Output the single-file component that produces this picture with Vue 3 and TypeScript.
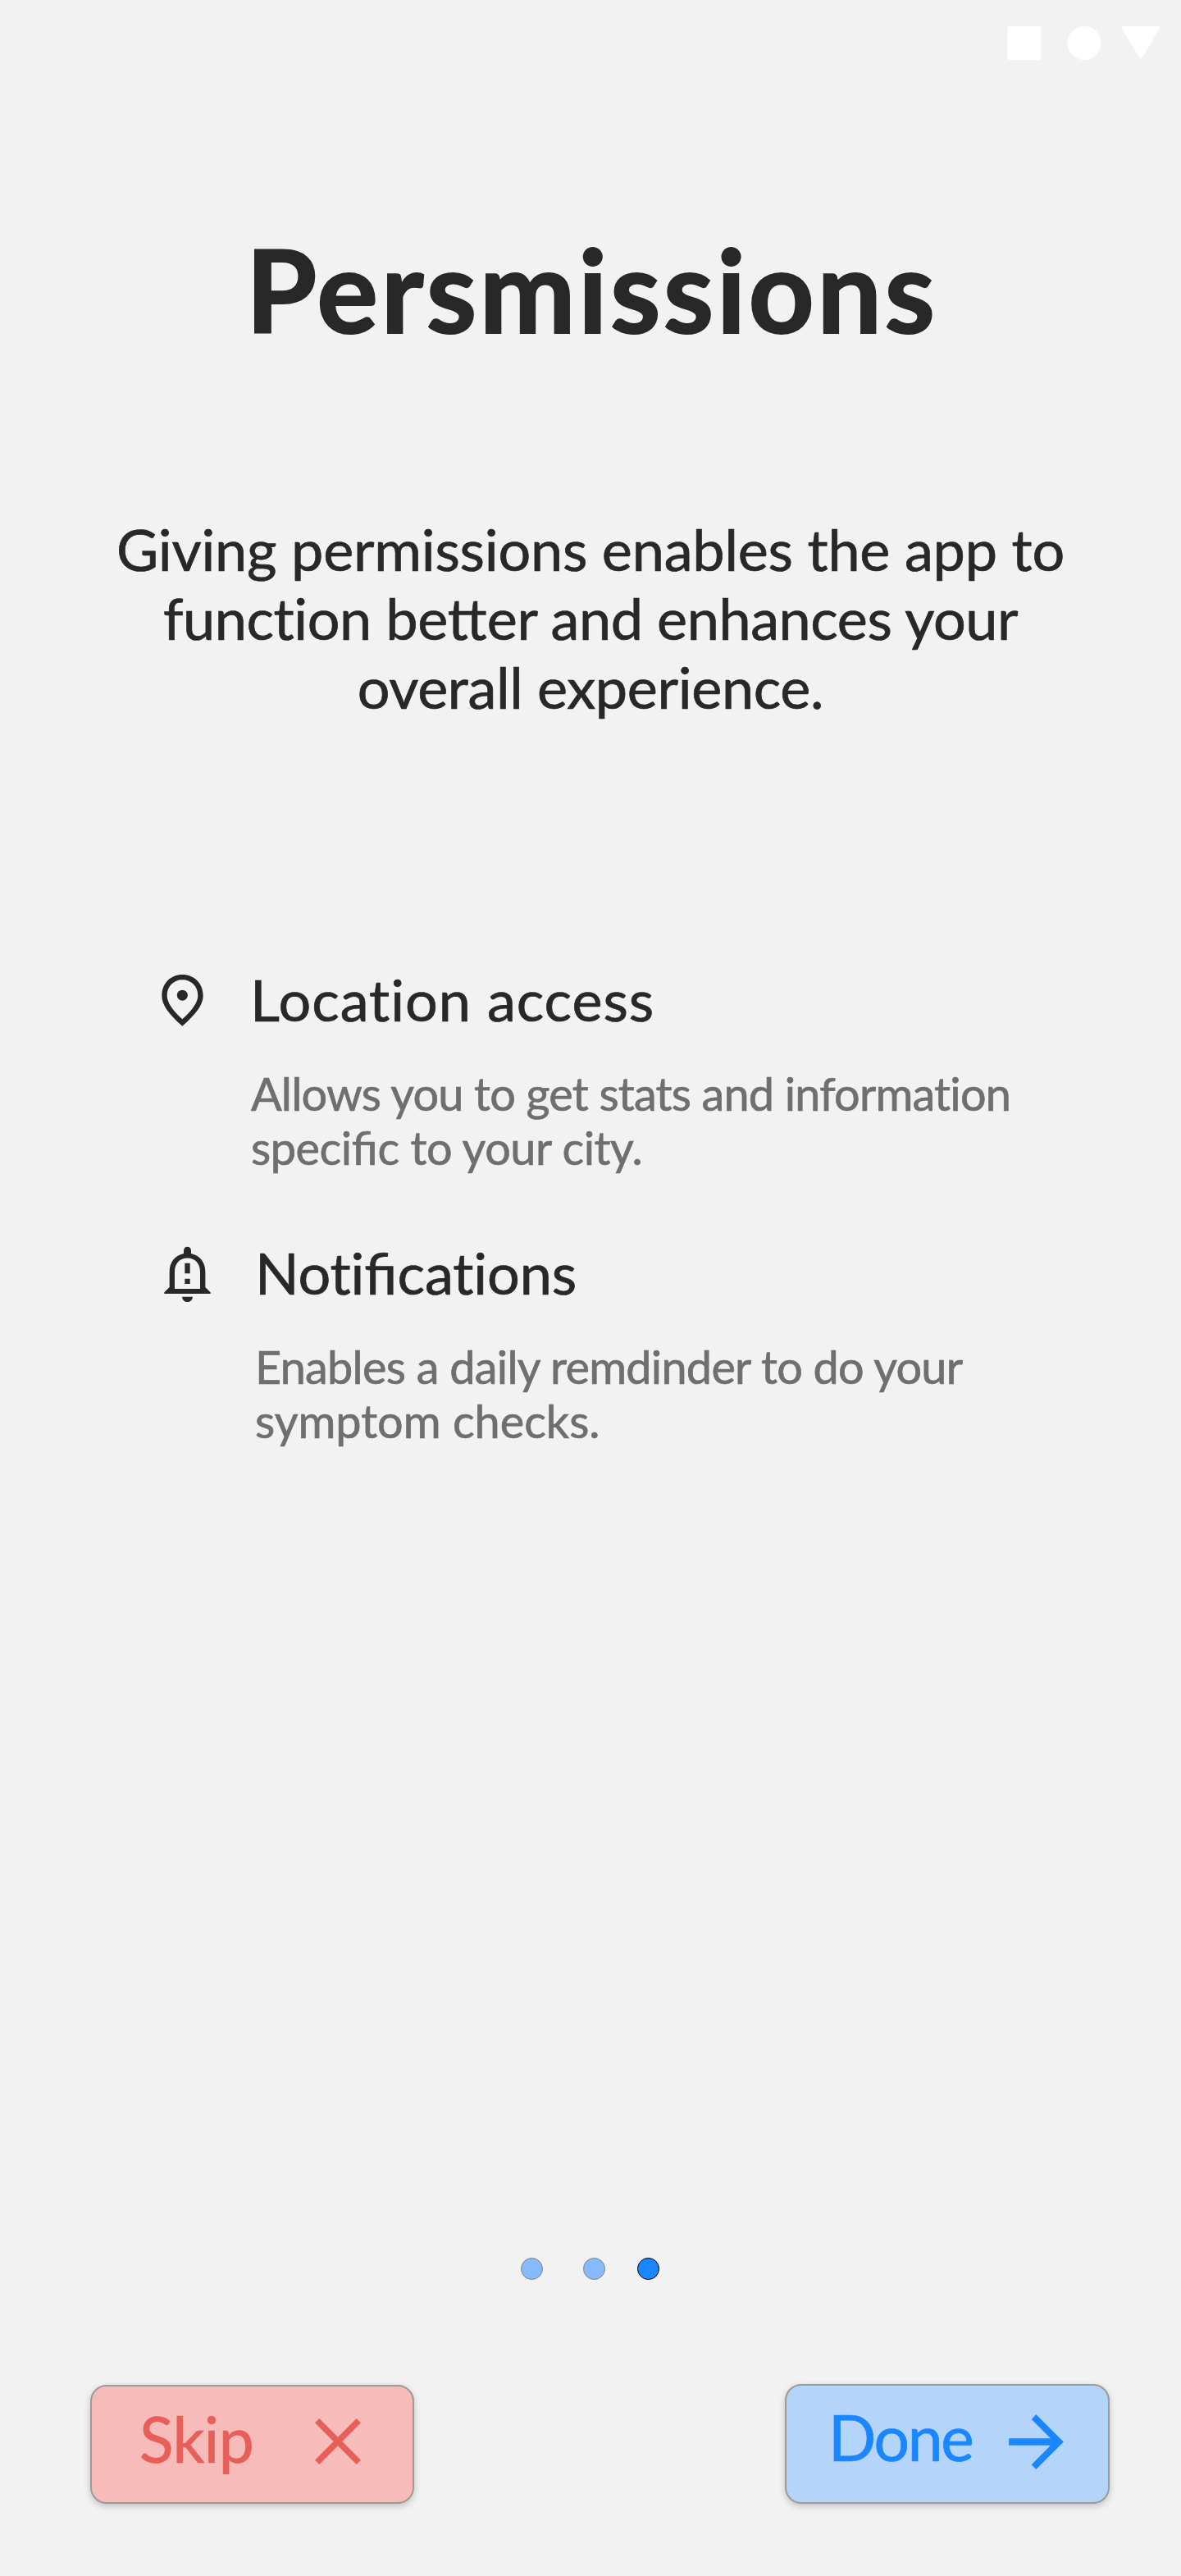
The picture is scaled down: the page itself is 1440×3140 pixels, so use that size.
<script setup lang="ts">
interface Line {
  text: string
  spacing: number
}
interface Permission {
  id: 'location' | 'notifications'
  title: Line
  details: Line[]
}

const intro: Line[] = [
  { text: 'Giving permissions enables the app to', spacing: -0.22 },
  { text: 'function better and enhances your', spacing: -0.44 },
  { text: 'overall experience.', spacing: -0.36 },
]

const permissions: Permission[] = [
  {
    id: 'location',
    title: { text: 'Location access', spacing: 0.97 },
    details: [
      { text: 'Allows you to get stats and information', spacing: -0.8 },
      { text: 'specific to your city.', spacing: -0.46 },
    ],
  },
  {
    id: 'notifications',
    title: { text: 'Notifications', spacing: -0.1 },
    details: [
      { text: 'Enables a daily remdinder to do your', spacing: -0.74 },
      { text: 'symptom checks.', spacing: 0 },
    ],
  },
]

const steps = ['first', 'second', 'third']

// Splits out the letter pairs that are set as ligatures.
const pieces = (text: string): string[] => text.split(/(fi|tt)/).filter(Boolean)
const isPair = (piece: string): boolean => piece === 'fi' || piece === 'tt'
</script>

<template>
  <main class="screen">
    <div class="status">
      <svg class="status-icons" viewBox="0 0 186 42">
        <rect x="0.5" y="0" width="41" height="41" rx="2.5" />
        <circle cx="94" cy="20.5" r="20.5" />
        <path d="M141.500 0H184.500Q187 0.800 185.800 3.300L165.200 37.500Q163 40.500 160.800 37.500L140.200 3.300Q139 0.800 141.500 0Z" />
      </svg>
    </div>

    <h1 class="title">Persmissions</h1>

    <p class="intro">
      <span v-for="line in intro" :key="line.text" class="line" :style="{ letterSpacing: line.spacing + 'px' }"><span v-for="(p, i) in pieces(line.text)" :key="i" :class="{ pair: isPair(p) }">{{ p }}</span></span>
    </p>

    <section class="permissions">
      <article v-for="item in permissions" :key="item.id" class="permission" :class="item.id">
        <svg v-if="item.id === 'location'" class="icon" viewBox="0 0 270 270">
          <path fill-rule="evenodd" d="M127 54C84 54 52 86 52 131C52 164 77 198 127 242C177 198 203 164 203 131C203 86 170 54 127 54ZM127 73C160 73 184 97 184 131C184 154 164 183 127 217C90 183 71 154 71 131C71 97 95 73 127 73Z" />
          <circle cx="127" cy="129.500" r="19.500" />
        </svg>
        <svg v-else class="icon" viewBox="0 0 270 270">
          <path fill-rule="evenodd" d="M132 69V57.500A13.500 13.500 0 0 1 159 57.500V69C191 76 211 101 211 135V192L230 211V216H61V211L80 192V135C80 101 100 76 132 69ZM99 198H192V135C192 105 173 85.500 145.500 85.500C118 85.500 99 105 99 135Z" />
          <path d="M136 104H155V142H136ZM136 161H155V180H136ZM126 227H165A19.500 19 0 0 1 126 227Z" />
        </svg>
        <div class="copy">
          <h2 :style="{ letterSpacing: item.title.spacing + 'px' }"><span v-for="(p, i) in pieces(item.title.text)" :key="i" :class="{ pair: isPair(p) }">{{ p }}</span></h2>
          <p>
            <span v-for="line in item.details" :key="line.text" class="line" :style="{ letterSpacing: line.spacing + 'px' }"><span v-for="(p, i) in pieces(line.text)" :key="i" :class="{ pair: isPair(p) }">{{ p }}</span></span>
          </p>
        </div>
      </article>
    </section>

    <div class="steps">
      <span v-for="step in steps" :key="step" class="dot" :class="step"></span>
    </div>

    <footer class="actions">
      <button class="button skip" type="button">
        <span>Skip</span>
        <svg viewBox="882 204 168 168">
          <path d="M882 220L898 204L966 272L1034 204L1050 220L982 288L1050 356L1034 372L966 304L898 372L882 356L950 288Z" />
        </svg>
      </button>
      <button class="button done" type="button">
        <span>Done</span>
        <svg viewBox="900 188 201 202">
          <path d="M900 276H1053L983 206L1000 188L1101 289L1000 390L983 373L1053 302H900Z" />
        </svg>
      </button>
    </footer>
  </main>
</template>

<style>
body {
  margin: 0;
  background: #f2f2f2;
}
</style>

<style scoped>
.screen {
  box-sizing: border-box;
  width: 1440px;
  height: 3140px;
  display: flex;
  flex-direction: column;
  overflow: hidden;
  background: #f2f2f2;
  color: #282828;
  font-family: 'Google Sans', Lato, sans-serif;
  -webkit-text-stroke: 0.7px currentColor;
}
h1,
h2,
p {
  margin: 0;
  font-weight: 400;
}
svg {
  display: block;
  flex: none;
  fill: currentColor;
}
.icon,
.status-icons,
.button svg {
  stroke: none;
}
.line {
  display: block;
  white-space: nowrap;
}
.pair {
  letter-spacing: 0;
}
.status {
  display: flex;
  justify-content: flex-end;
  padding: 32px 26px 0 0;
  color: #fff;
}
.status-icons {
  width: 186px;
  height: 42px;
  overflow: visible;
}
.title {
  margin-top: 193px;
  padding-left: 3px;
  text-align: center;
  font-size: 140px;
  font-weight: 700;
  line-height: 170px;
  letter-spacing: 3.3px;
  -webkit-text-stroke-width: 2px;
}
.intro {
  margin-top: 190px;
  text-align: center;
  font-size: 70.2px;
  line-height: 84px;
}
.permissions {
  display: flex;
  flex-direction: column;
  gap: 75px;
  margin-top: 291px;
  padding-left: 180px;
}
.permission {
  display: flex;
  align-items: flex-start;
  height: 260px;
}
.location {
  gap: 36px;
}
.notifications {
  gap: 41px;
}
.icon {
  width: 90px;
  height: 90px;
}
.copy {
  padding-top: 6px;
}
.notifications .copy {
  padding-top: 4px;
}
h2 {
  font-size: 70.2px;
  line-height: 84px;
  white-space: nowrap;
}
.location h2 {
  margin-left: -1px;
}
.copy p {
  margin-top: 40px;
  color: #6f6f6f;
  font-size: 55.8px;
  line-height: 66px;
}
.steps {
  display: flex;
  margin: 987px 0 0 635px;
}
.dot {
  box-sizing: border-box;
  width: 27px;
  height: 27px;
  border: 1px solid #7f8285;
  border-radius: 50%;
  background: #86bafb;
}
.second {
  margin-left: 49px;
}
.third {
  margin-left: 39px;
  border-color: #000;
  background: #1a86ff;
}
.actions {
  display: flex;
  justify-content: space-between;
  align-items: flex-end;
  margin: 127px 87px 0 110px;
}
.button {
  box-sizing: border-box;
  display: flex;
  justify-content: space-between;
  align-items: flex-start;
  border: 2px solid #9b9b9b;
  border-radius: 20px;
  box-shadow: 0 3px 8px rgba(0, 0, 0, 0.2);
  font: 400 76.8px/92px 'Google Sans', Lato, sans-serif;
  text-align: left;
  -webkit-text-stroke: 0.7px currentColor;
}
.skip {
  width: 395px;
  height: 145px;
  padding: 17px 63px 0 58px;
  background: #f7bcba;
  color: #e75f58;
  letter-spacing: -0.58px;
}
.skip svg {
  width: 56px;
  height: 56px;
  margin-top: 22px;
}
.done {
  width: 396px;
  height: 146px;
  padding: 16px 54px 0 51px;
  background: #b4d4fa;
  color: #1a86ff;
  letter-spacing: -2.32px;
}
.done svg {
  width: 67px;
  height: 67px;
  margin-top: 19px;
}
</style>
